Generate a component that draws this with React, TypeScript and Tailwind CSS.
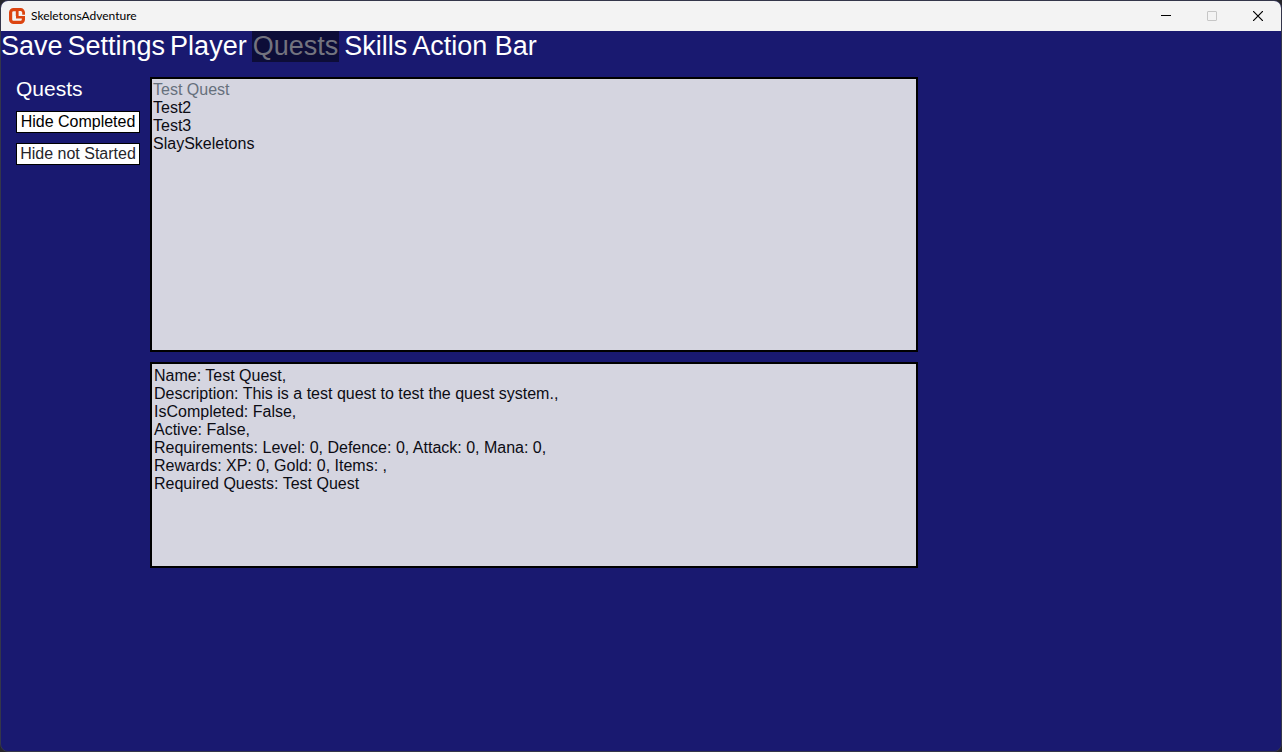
import { useState } from "react";
import clsx from "clsx";

const TABS = ["Save", "Settings", "Player", "Quests", "Skills", "Action Bar"];

const QUESTS = ["Test Quest", "Test2", "Test3", "SlaySkeletons"];

const DETAILS = [
  "Name: Test Quest,",
  "Description: This is a test quest to test the quest system.,",
  "IsCompleted: False,",
  "Active: False,",
  "Requirements: Level: 0, Defence: 0, Attack: 0, Mana: 0,",
  "Rewards: XP: 0, Gold: 0, Items: ,",
  "Required Quests: Test Quest",
];

function Logo() {
  return (
    <svg width="16" height="16" viewBox="0 0 16 16" fill="none" stroke="#dc4410" strokeWidth="3.2" aria-hidden="true">
      <path d="M7 1.6H4.6a3 3 0 0 0-3 3v6.8a3 3 0 0 0 3 3h6.8a3 3 0 0 0 3-3V9.4" />
      <path d="M7 9.2H16" strokeWidth="2.4" />
      <path d="M8.2 1V8M7 1.5h4.6a3 3 0 0 1 3 3V6.8" strokeWidth="2.8" />
    </svg>
  );
}

function TitleBar() {
  return (
    <header className="flex h-[30px] items-center bg-[#f3f3f3] pl-2 text-black">
      <Logo />
      <h1 className="ml-1.5 font-['Lato','Open_Sans',sans-serif] text-[12px] leading-4">SkeletonsAdventure</h1>
      <div className="ml-auto flex h-full">
        <button aria-label="Minimize" className="flex w-[46px] items-center justify-center">
          <svg width="10" height="10" viewBox="0 0 10 10" stroke="currentColor"><path d="M0 4.5h10" /></svg>
        </button>
        <button aria-label="Maximize" disabled className="flex w-[46px] items-center justify-center text-[#c6c6c6]">
          <svg width="10" height="10" viewBox="0 0 10 10" fill="none" stroke="currentColor"><rect x="0.5" y="0.5" width="9" height="9" rx="0.5" /></svg>
        </button>
        <button aria-label="Close" className="flex w-[46px] items-center justify-center">
          <svg width="10" height="10" viewBox="0 0 10 10" stroke="currentColor" strokeWidth="1.2"><path d="M0 0l10 10M10 0L0 10" /></svg>
        </button>
      </div>
    </header>
  );
}

export default function App() {
  const [tab, setTab] = useState("Quests");
  const [selected, setSelected] = useState("Test Quest");

  return (
    <div className="min-h-screen bg-[#26262b] font-['Liberation_Sans',Arial,sans-serif]">
      <div className="flex min-h-screen flex-col overflow-hidden rounded-lg border border-[#34364a] bg-[#191970]">
        <TitleBar />

        <nav className="flex gap-[5px] text-[27px] leading-[31px] text-white">
          {TABS.map((name) => (
            <button
              key={name}
              onClick={() => setTab(name)}
              className={clsx("whitespace-nowrap", tab === name && "bg-[#0d0d38] px-px text-[#73737f]")}
            >
              {name}
            </button>
          ))}
        </nav>

        <main className="flex pt-[15px]">
          <aside className="flex w-[149px] shrink-0 flex-col items-start gap-2.5 pl-[15px]">
            <h2 className="text-[21px] leading-6 text-white">Quests</h2>
            <button className="h-[22px] w-[124px] border border-black bg-white text-[16px] leading-5 whitespace-nowrap text-black">Hide Completed</button>
            <button className="h-[22px] w-[124px] border border-black bg-white text-[16px] leading-5 whitespace-nowrap text-[#26262b]">Hide not Started</button>
          </aside>

          <div className="flex w-3/5 flex-col gap-2.5 text-[16px] leading-[18px] text-[#0c0c14]">
            <ul className="min-h-[275px] border-2 border-black bg-[#d5d5e0] px-px pt-0.5">
              {QUESTS.map((quest) => (
                <li key={quest}>
                  <button onClick={() => setSelected(quest)} className={clsx("block", selected === quest && "text-[#66707c]")}>
                    {quest}
                  </button>
                </li>
              ))}
            </ul>
            <section className="min-h-[206px] border-2 border-black bg-[#d5d5e0] px-0.5 pt-[3px]">
              {DETAILS.map((line) => (
                <p key={line}>{line}</p>
              ))}
            </section>
          </div>
        </main>
      </div>
    </div>
  );
}
